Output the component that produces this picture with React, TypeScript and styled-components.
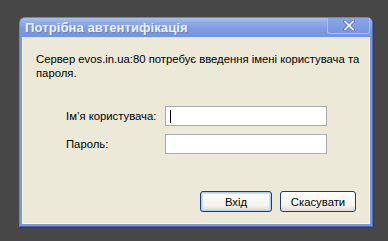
import React from "react";
import styled, { createGlobalStyle } from "styled-components";

const Global = createGlobalStyle`
  html, body { margin: 0; padding: 0; background: #474747; }
  body { font-family: "Liberation Sans", Arial, sans-serif; }
`;

const Desktop = styled.div`
  width: 388px;
  height: 241px;
  background: #474747;
  padding: 17px 0 0 19px;
  box-sizing: border-box;
`;

const Window = styled.div`
  width: 354px;
  height: 210px;
  display: flex;
  flex-direction: column;
  background: #7a96df;
  border-radius: 6px 6px 0 0;
  box-shadow: 1px 1px 0 #3c3c3c;
  box-sizing: border-box;
  border: 1px solid #6a85cf;
  border-bottom-color: #4a62b0;
  border-right-color: #5570c0;
`;

const TitleBar = styled.div`
  height: 19px;
  display: flex;
  align-items: center;
  justify-content: space-between;
  padding-left: 5px;
  background: linear-gradient(#a9c1f0 0%, #8eaae8 25%, #7c9be2 60%, #7494df 100%);
  border-radius: 5px 5px 0 0;
`;

const Title = styled.span`
  font-family: "Liberation Sans", Arial, sans-serif;
  font-weight: bold;
  font-size: 13px;
  color: #eef2ff;
  text-shadow: 1px 1px 0 #6a84c8;
  letter-spacing: 0.1px;
`;

const CloseButton = styled.div`
  width: 43px;
  height: 16px;
  align-self: flex-start;
  margin-right: 2px;
  display: flex;
  align-items: center;
  justify-content: center;
  border: 1px solid #a9bff0;
  border-top: none;
  border-radius: 0 0 3px 3px;
  background: linear-gradient(#88a5e8, #7896df);
  box-sizing: border-box;
`;

const Client = styled.div`
  flex: 1;
  margin: 0 2px 2px 2px;
  background: #ece9d8;
  border: 1px solid #f4f6fc;
  border-top: none;
  padding: 15px 13px 11px 13px;
  display: flex;
  flex-direction: column;
  font-size: 11px;
  color: #000;
`;

const Message = styled.p`
  margin: 0;
  line-height: 14px;
  font-size: 11.3px;
  width: 330px;
`;

const Form = styled.div`
  margin-top: 26px;
  margin-left: 30px;
  display: grid;
  grid-template-columns: 99px 162px;
  row-gap: 8px;
  align-items: center;
`;

const Label = styled.label`
  font-size: 11.3px;
`;

const Field = styled.div`
  height: 20px;
  box-sizing: border-box;
  border: 1px solid #a5acb5;
  background: #fff;
  position: relative;
`;

const Caret = styled.span`
  position: absolute;
  left: 4px;
  top: 3px;
  width: 1px;
  height: 13px;
  background: #000;
`;

const Buttons = styled.div`
  margin-top: auto;
  display: flex;
  justify-content: flex-end;
  gap: 8px;
`;

const Button = styled.div<{ $default?: boolean; $w: number }>`
  width: ${(p) => p.$w}px;
  height: 21px;
  box-sizing: border-box;
  border: 1px solid #1c3f78;
  border-radius: 3px;
  background: linear-gradient(#ffffff, #f4f3ee 70%, #dedbd0);
  display: flex;
  align-items: center;
  justify-content: center;
  font-size: 11.3px;
  box-shadow: ${(p) => (p.$default ? "inset 0 0 0 1px #aecbf6, inset 0 0 0 2px #cfe0fa" : "none")};
`;

export default function App() {
  return (
    <>
      <Global />
      <Desktop>
        <Window>
          <TitleBar>
            <Title>Потрібна автентифікація</Title>
            <CloseButton>
              <svg width="12" height="11" viewBox="0 0 12 11">
                <path d="M2 1.5 L10 9.5 M10 1.5 L2 9.5" stroke="#5a72b8" strokeWidth="3.4" strokeLinecap="square" />
                <path d="M2 1.5 L10 9.5 M10 1.5 L2 9.5" stroke="#e8eeff" strokeWidth="1.8" strokeLinecap="square" />
              </svg>
            </CloseButton>
          </TitleBar>
          <Client>
            <Message>Сервер evos.in.ua:80 потребує введення імені користувача та пароля.</Message>
            <Form>
              <Label>Ім’я користувача:</Label>
              <Field>
                <Caret />
              </Field>
              <Label>Пароль:</Label>
              <Field />
            </Form>
            <Buttons>
              <Button $default $w={72}>Вхід</Button>
              <Button $w={76}>Скасувати</Button>
            </Buttons>
          </Client>
        </Window>
      </Desktop>
    </>
  );
}
